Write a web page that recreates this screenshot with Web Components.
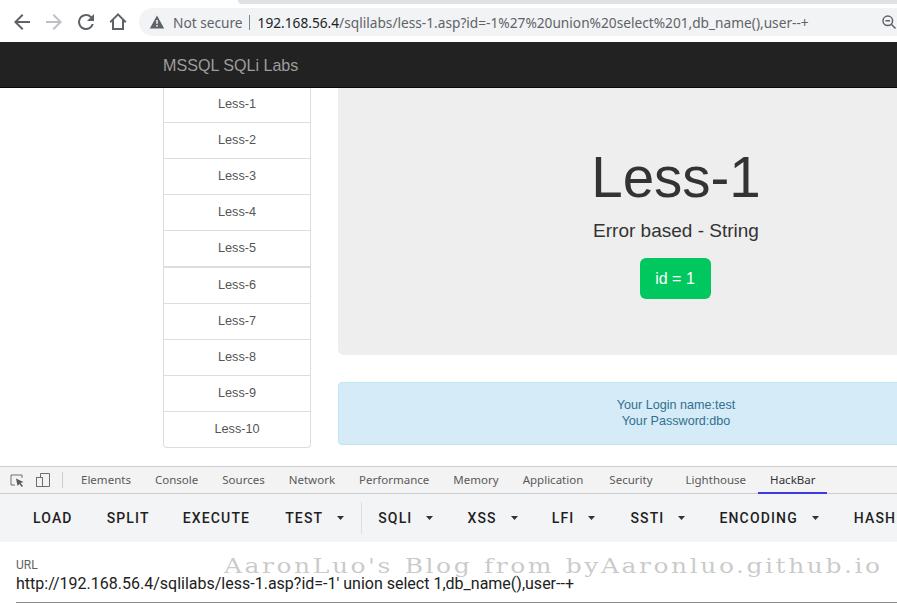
<!DOCTYPE html>
<html><head><meta charset="utf-8"><style>
html,body{margin:0;padding:0;background:#fff;height:603px;overflow:hidden}
body{width:897px;font-family:"Liberation Sans",sans-serif;display:flex;flex-direction:column;position:relative}
</style></head><body>
<browser-bar></browser-bar>
<lab-nav></lab-nav>
<lab-page>
  <lab-side></lab-side>
  <lab-main></lab-main>
</lab-page>
<dev-tabs></dev-tabs>
<hack-bar></hack-bar>
<hack-url></hack-url>
<water-mark>AaronLuo's Blog from byAaronluo.github.io</water-mark>
<script>
function def(name,html){customElements.define(name,class extends HTMLElement{constructor(){super();this.attachShadow({mode:'open'}).innerHTML=html;}});}
def('browser-bar',`<style>
:host{display:block;height:42px;background:#fff;position:relative;flex:none}
.tab{position:absolute;left:238px;right:0;top:0;height:4px;background:#dee1e6;border-bottom-left-radius:5px}
.row{display:flex;align-items:center;height:42px;box-sizing:border-box;padding-top:2px}
svg{display:block;flex:none}
.btn{width:24px;height:24px;margin-right:8px}
.omni{margin-left:1px;flex:1;height:28px;background:#f1f3f4;border-radius:14px 0 0 14px;display:flex;align-items:center;font:13.7px "Noto Sans",sans-serif;color:#5f6368;white-space:nowrap;position:relative}
.sep{width:1px;height:15px;background:#80868b;margin:0 8px 0 6px}
b{font-weight:400;color:#202124}
.z{position:absolute;right:0;top:6px}
.alert{margin:0 8px 0 10px}
</style>
<div class="tab"></div>
<div class="row">
<svg class="btn" style="margin-left:10px;margin-right:8px" viewBox="0 0 24 24"><path fill="#5f6368" d="M20 11H7.830l5.590-5.590L12 4l-8 8 8 8 1.410-1.410L7.830 13H20v-2z"/></svg>
<svg class="btn" viewBox="0 0 24 24"><path fill="#bdc1c6" d="M4 11h12.170l-5.590-5.590L12 4l8 8-8 8-1.410-1.410L16.170 13H4v-2z"/></svg>
<svg class="btn" viewBox="0 0 24 24"><path fill="#5f6368" d="M17.650 6.350A7.960 7.960 0 0 0 12 4a8 8 0 1 0 7.730 10h-2.080A6 6 0 1 1 12 6c1.660 0 3.140.690 4.220 1.780L13 11h7V4l-2.350 2.350z"/></svg>
<svg class="btn" viewBox="0 0 24 24"><path fill="#5f6368" d="M12 3 3.500 11.500l1.400 1.400 1.100-1.100V20h12v-8.200l1.100 1.100 1.400-1.400L12 3zm4 15H8V9.800l4-4 4 4V18z"/></svg>
<div class="omni">
<svg class="alert" width="16" height="16" viewBox="0 0 16 16"><path fill="#5f6368" d="M8 1.500.8 14.500h14.400L8 1.500zM8.800 12.500H7.200v-1.600h1.600v1.600zm0-2.800H7.200V6h1.600v3.700z"/></svg>
<span>Not secure</span><i class="sep"></i><span><b>192.168.56.4</b>/sqlilabs/less-1.asp?id=-1%27%20union%20select%201,db_name(),user--+</span>
<svg class="z" width="16" height="16" viewBox="0 0 16 16" fill="none" stroke="#5f6368" stroke-width="1.500"><circle cx="6.800" cy="6.800" r="4.800"/><path d="M10.300 10.300 14.500 14.500M4.500 6.800h4.600"/></svg>
</div></div>`);
def('lab-nav',`<style>
:host{display:flex;align-items:center;flex:none;height:46px;box-sizing:border-box;background:#222;border-bottom:1px solid #080808;padding:2px 0 0 163px;color:#9d9d9d;font-size:16.1px}
</style>MSSQL SQLi Labs`);
def('lab-page',`<style>
:host{display:flex;flex:none;height:378px;overflow:hidden;align-items:flex-start}
</style><slot></slot>`);
const items=[1,2,3,4,5,6,7,8,9,10].map(n=>`<a class="${n==6?'x':''}">Less-${n}</a>`).join('');
def('lab-side',`<style>
:host{display:block;flex:none;width:148px;margin:-1px 0 0 163px;box-sizing:border-box;border:1px solid #ddd;border-top:0;border-radius:0 0 4px 4px;font-size:12.7px;color:#555;text-align:center}
a{display:block;height:35px;line-height:34px;border-bottom:1px solid #ddd}
a.x{border-top:1px solid #ddd}
a:last-child{border-bottom:0}
</style>${items}`);
def('lab-main',`<style>
:host{display:block;flex:none;width:676px;margin-left:27px;text-align:center}
.j{height:267px;background:#eee;border-radius:0 0 6px 6px;box-sizing:border-box;padding-top:55px;color:#333}
h1{margin:0;font-size:56.5px;font-weight:400;line-height:70px}
p{margin:4px 0 0;font-size:19px;line-height:28px}
.b{display:inline-block;margin:13px 2px 0 0;width:71px;height:41px;line-height:41px;background:#00c85f;color:#fff;border-radius:6px;font-size:16px}
.a{margin-top:27px;height:63px;box-sizing:border-box;border:1px solid #bce8f1;background:#d5ebf7;border-radius:4px;color:#31708f;font-size:12.6px;line-height:16px;padding-top:14px}
</style><div class="j"><h1>Less-1</h1><p>Error based - String</p><span class="b">id = 1</span></div>
<div class="a">Your Login name:test<br>Your Password:dbo</div>`);
def('dev-tabs',`<style>
:host{display:flex;align-items:center;flex:none;height:28px;box-sizing:border-box;background:#f3f3f3;border-top:1px solid #cbcdd1;border-bottom:1px solid #cbcdd1;font:11.53px "Noto Sans",sans-serif;color:#5a5a5a;white-space:nowrap;position:relative}
svg{display:block;flex:none}
.sep{width:1px;height:16px;background:#ccc}
span{padding:0 12px;line-height:26px}
.on{color:#333;position:relative}
.on:after{content:"";position:absolute;left:0;right:0;bottom:-1px;height:2px;background:#3b3be0}
</style>
<svg style="margin-left:9px" width="16" height="16" viewBox="0 0 16 16" fill="none"><path d="M6 13H2V3h11v3" stroke="#6e6e6e" stroke-width="1"/><path d="M7 6.500 14.500 10l-3 1 2.500 3-1.200 1-2.500-3-1.800 2z" fill="#5a5a5a"/></svg>
<svg style="margin-left:10px" width="16" height="16" viewBox="0 0 16 16" fill="none" stroke="#6e6e6e" stroke-width="1"><path d="M5.500 5.500V1.500h9v13h-7"/><rect x="1.500" y="5.500" width="6" height="9"/></svg>
<i class="sep" style="margin-left:11px;margin-right:6px"></i>
<span>Elements</span><span>Console</span><span>Sources</span><span>Network</span><span>Performance</span><span>Memory</span><span>Application</span><span style="margin-left:2px">Security</span><span style="margin-left:9px">Lighthouse</span><span class="on">HackBar</span>`);
const btn=(t,m)=>`<a style="margin-left:${m}px">${t}</a>`;
const dd=(t,m)=>`<a style="margin-left:${m}px">${t}<svg width="7" height="4" viewBox="0 0 7 4"><path d="M0 0h7L3.500 4z" fill="#333"/></svg></a>`;
def('hack-bar',`<style>
:host{display:flex;align-items:center;flex:none;height:48px;background:#f3f4f5;font:500 14px Roboto,sans-serif;letter-spacing:1.15px;color:#1f1f1f;white-space:nowrap;overflow:hidden}
a{display:flex;align-items:center;flex:none}
svg{margin-left:14px;flex:none}
.sep{width:1px;height:32px;background:#ddd;margin-left:17px;flex:none}
</style>${btn('LOAD',33)}${btn('SPLIT',34)}${btn('EXECUTE',33)}${dd('TEST',35)}<i class="sep"></i>${dd('SQLI',16)}${dd('XSS',34)}${dd('LFI',34)}${dd('SSTI',35)}${dd('ENCODING',34)}${btn('HASH',35)}`);
def('hack-url',`<style>
:host{display:block;flex:none;height:61px;background:#fff;box-sizing:border-box;padding:16px 0 0 16px;font-family:Roboto,sans-serif;color:#212121}
.l{font-size:12px;line-height:14px;color:#616161}
.v{font-size:16px;line-height:20px;height:31px;box-sizing:border-box;padding-top:2px;border-bottom:1px solid #8c8c8c;white-space:nowrap}
</style><div class="l">URL</div><div class="v">http://192.168.56.4/sqlilabs/less-1.asp?id=-1' union select 1,db_name(),user--+</div>`);
def('water-mark',`<style>
:host{display:block;position:absolute;left:224px;top:554px;font:20px "DejaVu Serif",serif;letter-spacing:2.03px;word-spacing:1px;transform:scaleX(1.25);transform-origin:0 0;color:rgba(150,150,150,.5);white-space:nowrap}
</style><slot></slot>`);
</script></body></html>
